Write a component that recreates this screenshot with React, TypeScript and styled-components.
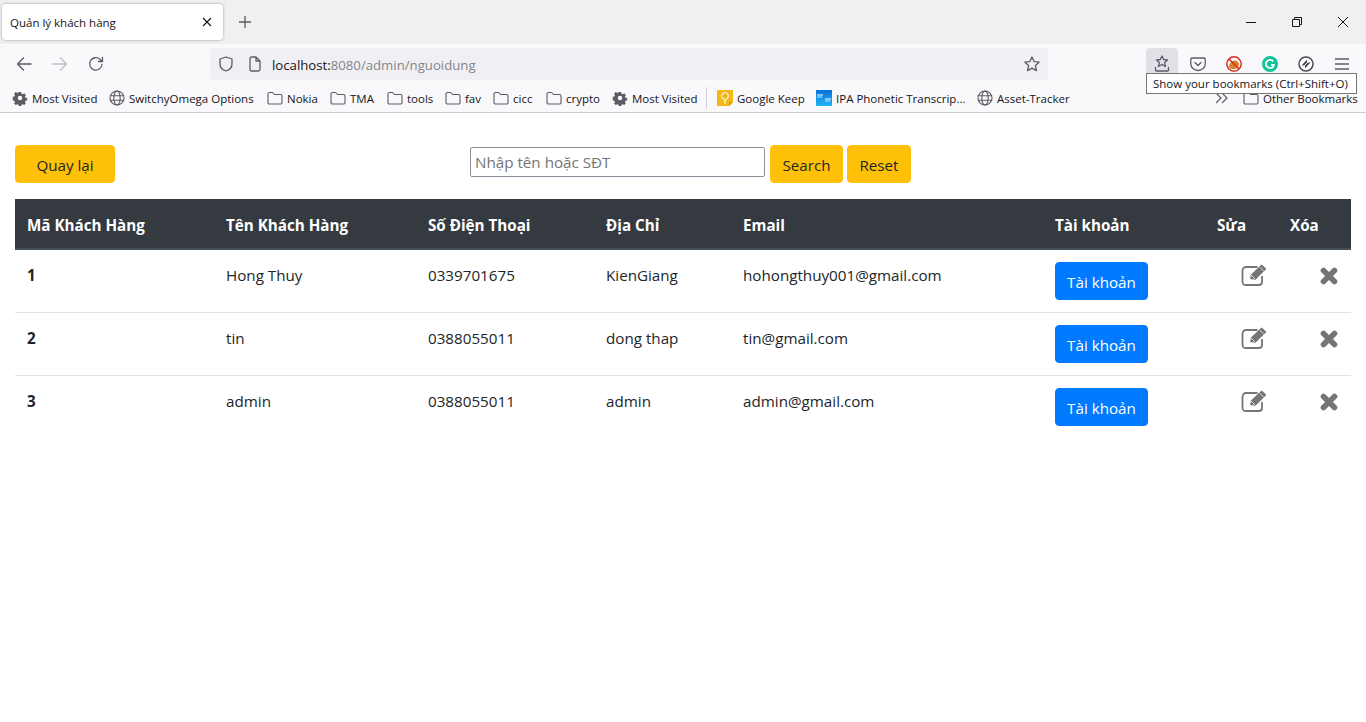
import React from "react";
import styled, { createGlobalStyle } from "styled-components";

const Global = createGlobalStyle`
  html, body { margin: 0; padding: 0; background: #fff; }
  body { font-family: "Open Sans", "Noto Sans", sans-serif; color: #212529; width: 1366px; height: 722px; overflow: hidden; }
  * { box-sizing: border-box; }
`;

const Browser = styled.div`
  position: relative;
  height: 113px;
`;
const TabStrip = styled.div`
  height: 44px;
  background: #f0f0f0;
  display: flex;
  align-items: flex-start;
  padding: 4px 0 0 2px;
`;
const Tab = styled.div`
  width: 221px;
  height: 36px;
  background: #fff;
  border-radius: 4px;
  box-shadow: 0 0 3px rgba(0, 0, 0, 0.35);
  display: flex;
  align-items: center;
  justify-content: space-between;
  padding: 0 11px 0 8px;
  font-size: 11.5px;
  color: #15141a;
`;
const NewTab = styled.div`
  width: 44px;
  height: 36px;
  display: flex;
  align-items: center;
  justify-content: center;
`;
const WindowControls = styled.div`
  margin-left: auto;
  margin-top: -4px;
  display: flex;
`;
const WindowButton = styled.div`
  width: 46px;
  height: 44px;
  display: flex;
  align-items: center;
  justify-content: center;
`;
const NavBar = styled.div`
  height: 44px;
  background: #f9f9fb;
  display: flex;
  align-items: center;
  padding: 0 0 4px 6px;
`;
const NavButton = styled.div<{ $active?: boolean }>`
  width: 36px;
  height: 32px;
  display: flex;
  align-items: center;
  justify-content: center;
  flex: none;
  border-radius: 4px;
  background: ${(p) => (p.$active ? "#e0e0e6" : "transparent")};
`;
const UrlBar = styled.div`
  width: 838px;
  height: 32px;
  margin-left: 96px;
  background: #f0f0f4;
  border-radius: 4px;
  display: flex;
  align-items: center;
  padding: 0 8px 0 8px;
  font-size: 13.2px;
  flex: none;
`;
const UrlHost = styled.span`
  color: #15141a;
`;
const UrlPath = styled.span`
  color: #85848a;
`;
const UrlText = styled.div`
  margin: 1px 0 0 9px;
  flex: 1;
`;
const ToolGroup = styled.div`
  margin-left: 98px;
  display: flex;
  align-items: center;
`;
const BookmarkBar = styled.div`
  height: 25px;
  background: #f9f9fb;
  border-bottom: 1px solid #ccc;
  display: flex;
  align-items: center;
  padding: 0 0 4px 12px;
  font-size: 11.5px;
  color: #15141a;
  white-space: nowrap;
`;
const Bookmark = styled.div<{ $w: number }>`
  width: ${(p) => p.$w}px;
  flex: none;
  display: flex;
  align-items: center;
  gap: 4px;
  overflow: hidden;
`;
const BookmarkDivider = styled.div`
  width: 1px;
  height: 22px;
  background: #cfcfd8;
  margin: 0 10px 0 0;
  flex: none;
`;
const Tooltip = styled.div`
  position: absolute;
  left: 1146px;
  top: 73px;
  width: 211px;
  height: 21px;
  background: #fff;
  border: 1px solid #767676;
  font-size: 11.5px;
  line-height: 19px;
  padding-left: 6px;
  color: #15141a;
  white-space: nowrap;
`;

const Page = styled.main`
  padding: 32px 15px 0;
`;
const TopRow = styled.div`
  display: flex;
  align-items: flex-start;
  height: 38px;
  margin-bottom: 16px;
`;
const Button = styled.button<{ $variant: "warning" | "primary"; $w: number }>`
  width: ${(p) => p.$w}px;
  height: 38px;
  flex: none;
  border: 1px solid ${(p) => (p.$variant === "warning" ? "#ffc107" : "#007bff")};
  background: ${(p) => (p.$variant === "warning" ? "#ffc107" : "#007bff")};
  color: ${(p) => (p.$variant === "warning" ? "#212529" : "#fff")};
  border-radius: 4px;
  font-family: inherit;
  font-size: 15.2px;
  padding: 1px 0 0;
`;
const SearchForm = styled.form`
  display: flex;
  align-items: flex-start;
  gap: 5px;
  margin-left: 355px;
`;
const SearchGroup = styled.div`
  display: flex;
  gap: 4px;
`;
const SearchInput = styled.input`
  width: 295px;
  height: 30px;
  margin-top: 2px;
  border: 1px solid #8f8f9d;
  border-radius: 2px;
  padding: 0 4px;
  font-family: inherit;
  font-size: 15.2px;
  &::placeholder { color: #757575; opacity: 1; }
`;
const Table = styled.table`
  width: 1336px;
  border-collapse: collapse;
  table-layout: fixed;
  font-size: 15.2px;
`;
const HeadCell = styled.th<{ $w: number }>`
  width: ${(p) => p.$w}px;
  height: 50px;
  background: #343a40;
  color: #fff;
  border-bottom: 2px solid #454d55;
  padding: 2px 12px 0;
  text-align: left;
  font-weight: 700;
`;
const Row = styled.tr`
  border-bottom: 1px solid #dee2e6;
  &:last-child { border-bottom: none; }
`;
const Cell = styled.td<{ $bold?: boolean }>`
  height: 63px;
  padding: 12px;
  vertical-align: top;
  line-height: 26px;
  font-weight: ${(p) => (p.$bold ? 700 : 400)};
`;
const EditGlyph = styled.svg`
  display: block;
  width: 27px;
  height: 22px;
  margin: 2px 0 0 24px;
`;
const CloseGlyph = styled.svg`
  display: block;
  width: 18px;
  height: 18px;
  margin: 5px 0 0 30px;
`;

const EditIcon = () => (
  <EditGlyph viewBox="0 0 27 22">
    <path d="M16.500 3H5a3.500 3.500 0 00-3.500 3.500v11.500A3 3 0 005 21h13a3 3 0 003-3v-6" fill="none" stroke="#757575" strokeWidth="1.800" />
    <path d="M9 15l1-4.500L20 .9a1 1 0 011.300 0l3.500 3.400a1 1 0 010 1.300L14.500 15.800z" fill="#757575" />
    <path d="M19 3.400l3.700 3.600" stroke="#fff" strokeWidth=".8" />
    <path d="M10 11l4 4" stroke="#fff" strokeWidth=".8" />
  </EditGlyph>
);
const CloseIcon = () => (
  <CloseGlyph viewBox="0 0 18 18">
    <path d="M3.500 3.500l11 11M14.500 3.500l-11 11" stroke="#757575" strokeWidth="5.600" strokeLinecap="round" />
  </CloseGlyph>
);

const ic = { fill: "none", stroke: "#5b5b66", strokeWidth: 1.3, strokeLinecap: "round" as const, strokeLinejoin: "round" as const };

const Gear = () => (
  <svg width="16" height="16" viewBox="0 0 16 16" style={{ flex: "none" }}>
    <path fill="#5b5b66" fillRule="evenodd" d="M6.600 1h2.800l.4 2 1.400.6 1.700-1.100 2 2-1.100 1.700.6 1.400 2 .4v2.800l-2 .4-.6 1.400 1.100 1.700-2 2-1.700-1.100-1.400.6-.4 2H6.600l-.4-2-1.400-.6-1.700 1.100-2-2 1.100-1.700-.6-1.400-2-.4V6.600l2-.4.6-1.400L1.100 3.100l2-2 1.700 1.100L6.200 1.600zM8 5.400a2.600 2.600 0 100 5.200 2.600 2.600 0 000-5.200z" transform="translate(1.100 1.100) scale(.86)" />
  </svg>
);
const Globe = () => (
  <svg width="16" height="16" viewBox="0 0 16 16" style={{ flex: "none" }} {...ic} strokeWidth={1.1}>
    <circle cx="8" cy="8" r="7" />
    <ellipse cx="8" cy="8" rx="3.200" ry="7" />
    <path d="M1.200 5.800h13.600M1.200 10.200h13.600" />
  </svg>
);
const Folder = () => (
  <svg width="16" height="16" viewBox="0 0 16 16" style={{ flex: "none" }} {...ic} strokeWidth={1.1}>
    <path d="M1 4a1.500 1.500 0 011.500-1.500h3.200L7.500 4.500h6A1.500 1.500 0 0115 6v6.500a1.500 1.500 0 01-1.500 1.500h-11A1.500 1.500 0 011 12.500z" />
  </svg>
);
const Keep = () => (
  <svg width="16" height="16" viewBox="0 0 16 16" style={{ flex: "none" }}>
    <path fill="#f5b818" d="M0 0h16v12l-4 4H0z" />
    <path fill="#d99c0c" d="M16 12h-4v4z" />
    <circle cx="8" cy="6" r="3.400" fill="none" stroke="#fff" strokeWidth="1" />
    <path stroke="#fff" strokeWidth="1.200" d="M6.500 11h3M7 13h2" />
  </svg>
);
const Ipa = () => (
  <svg width="16" height="16" viewBox="0 0 16 16" style={{ flex: "none" }}>
    <defs>
      <linearGradient id="ipa" x1="0" y1="0" x2="0" y2="1">
        <stop offset="0" stopColor="#0a6fd8" />
        <stop offset="1" stopColor="#21b4f7" />
      </linearGradient>
    </defs>
    <rect width="16" height="16" fill="url(#ipa)" />
    <path stroke="#fff" strokeWidth="1" d="M1 5h6M9 9h6" />
    <path stroke="#cfe8ff" strokeWidth="1" d="M1 7h5M9 11h5" />
  </svg>
);

const customers = [
  { id: 1, name: "Hong Thuy", phone: "0339701675", addr: "KienGiang", email: "hohongthuy001@gmail.com" },
  { id: 2, name: "tin", phone: "0388055011", addr: "dong thap", email: "tin@gmail.com" },
  { id: 3, name: "admin", phone: "0388055011", addr: "admin", email: "admin@gmail.com" },
];

const heads: [string, number][] = [
  ["Mã Khách Hàng", 199], ["Tên Khách Hàng", 202], ["Số Điện Thoại", 178], ["Địa Chỉ", 137],
  ["Email", 312], ["Tài khoản", 162], ["Sửa", 73], ["Xóa", 73],
];

export default function App() {
  return (
    <>
      <Global />
      <Browser>
        <TabStrip>
          <Tab>
            <span>Quản lý khách hàng</span>
            <svg width="10" height="10" viewBox="0 0 10 10" stroke="#15141a" strokeWidth="1.100"><path d="M1 1l8 8M9 1l-8 8" /></svg>
          </Tab>
          <NewTab>
            <svg width="14" height="14" viewBox="0 0 14 14" stroke="#5b5b66" strokeWidth="1.300"><path d="M7 1v12M1 7h12" /></svg>
          </NewTab>
          <WindowControls>
            <WindowButton>
              <svg width="10" height="10" viewBox="0 0 10 10" stroke="#15141a"><path d="M0 5.500h10" /></svg>
            </WindowButton>
            <WindowButton>
              <svg width="10" height="10" viewBox="0 0 10 10" fill="none" stroke="#15141a"><path d="M.5 2.500h7v7h-7zM2.500 2.500v-2h7v7h-2" /></svg>
            </WindowButton>
            <WindowButton>
              <svg width="10" height="10" viewBox="0 0 10 10" stroke="#15141a"><path d="M0 0l10 10M10 0L0 10" /></svg>
            </WindowButton>
          </WindowControls>
        </TabStrip>
        <NavBar>
          <NavButton>
            <svg width="16" height="16" viewBox="0 0 16 16" {...ic}><path d="M15 8H1.500M7.500 2l-6 6 6 6" /></svg>
          </NavButton>
          <NavButton>
            <svg width="16" height="16" viewBox="0 0 16 16" {...ic} stroke="#bdbdc2"><path d="M1 8h13.500M8.500 2l6 6-6 6" /></svg>
          </NavButton>
          <NavButton>
            <svg width="16" height="16" viewBox="0 0 16 16" {...ic}><path d="M14 8.500A6.200 6.200 0 1112 3.300L14.500 5.500M14.500 1.500v4h-4" /></svg>
          </NavButton>
          <UrlBar>
            <svg width="16" height="16" viewBox="0 0 16 16" {...ic} style={{ flex: "none" }}><path d="M8 1l6 2v5c0 3.500-3 6-6 7-3-1-6-3.500-6-7V3z" /></svg>
            <svg width="16" height="16" viewBox="0 0 16 16" {...ic} style={{ flex: "none", marginLeft: 13 }}><path d="M3 2.500A1.500 1.500 0 014.500 1h4.500L13 5v8.500a1.500 1.500 0 01-1.500 1.500h-7A1.500 1.500 0 013 13.500zM9 1v4h4" /></svg>
            <UrlText><UrlHost>localhost:</UrlHost><UrlPath>8080/admin/nguoidung</UrlPath></UrlText>
            <svg width="16" height="16" viewBox="0 0 16 16" {...ic} style={{ flex: "none" }}><path d="M8 1l2.100 4.600 5 .6-3.700 3.400 1 5L8 12.100 3.600 14.600l1-5L.9 6.200l5-.6z" /></svg>
          </UrlBar>
          <ToolGroup>
            <NavButton $active style={{ width: 32 }}>
              <svg width="16" height="18" viewBox="0 0 16 18" {...ic}><path d="M8 1l1.700 3.500 3.800.5-2.800 2.600.8 3.800L8 9.500l-3.500 1.900.8-3.800L2.500 5l3.800-.5zM1.500 12.500v2.500a1 1 0 001 1h11a1 1 0 001-1v-2.500" /></svg>
            </NavButton>
            <NavButton style={{ marginLeft: 2 }}>
              <svg width="16" height="16" viewBox="0 0 16 16" {...ic}><path d="M2 2h12a1.200 1.200 0 011.200 1.200V8a7.200 6.500 0 01-14.400 0V3.200A1.200 1.200 0 012 2zM5 6.500L8 9.500l3-3" /></svg>
            </NavButton>
            <NavButton>
              <svg width="16" height="16" viewBox="0 0 16 16"><circle cx="8" cy="8" r="7.200" fill="#fff" stroke="#d92d20" strokeWidth="1.500" /><path d="M3 11c0-4 3-6.500 6-6.500 2 0 4 2 4 4S11 13 8 13H5z" fill="#d9822b" /><path d="M3 3l10 10" stroke="#d92d20" strokeWidth="1.500" /></svg>
            </NavButton>
            <NavButton>
              <svg width="16" height="16" viewBox="0 0 16 16"><circle cx="8" cy="8" r="8" fill="#15c39a" /><path d="M11.300 5.400A4.100 4.100 0 108.300 12c2 0 3.300-1.300 3.500-3.200H9" fill="none" stroke="#fff" strokeWidth="1.700" /></svg>
            </NavButton>
            <NavButton>
              <svg width="16" height="16" viewBox="0 0 16 16"><circle cx="8" cy="8" r="7" fill="#fff" stroke="#4a4a52" strokeWidth="1.500" /><path d="M3.500 9.500L9 3.500v3h3.500L7 12.500v-3z" fill="#4a4a52" /><path d="M4 12l8-8" stroke="#fff" strokeWidth="1" /></svg>
            </NavButton>
            <NavButton>
              <svg width="14" height="12" viewBox="0 0 14 12" stroke="#5b5b66" strokeWidth="1.300"><path d="M0 1h14M0 6h14M0 11h14" /></svg>
            </NavButton>
          </ToolGroup>
        </NavBar>
        <BookmarkBar>
          <Bookmark $w={97}><Gear />Most Visited</Bookmark>
          <Bookmark $w={158}><Globe />SwitchyOmega Options</Bookmark>
          <Bookmark $w={63}><Folder />Nokia</Bookmark>
          <Bookmark $w={57}><Folder />TMA</Bookmark>
          <Bookmark $w={58}><Folder />tools</Bookmark>
          <Bookmark $w={48}><Folder />fav</Bookmark>
          <Bookmark $w={53}><Folder />cicc</Bookmark>
          <Bookmark $w={66}><Folder />crypto</Bookmark>
          <Bookmark $w={94}><Gear />Most Visited</Bookmark>
          <BookmarkDivider />
          <Bookmark $w={99}><Keep />Google Keep</Bookmark>
          <Bookmark $w={161}><Ipa />IPA Phonetic Transcrip...</Bookmark>
          <Bookmark $w={238}><Globe />Asset-Tracker</Bookmark>
          <Bookmark $w={28}>
            <svg width="14" height="12" viewBox="0 0 14 12" fill="none" stroke="#5b5b66" strokeWidth="1.200"><path d="M1 1l5 5-5 5M7 1l5 5-5 5" /></svg>
          </Bookmark>
          <Bookmark $w={120}><Folder />Other Bookmarks</Bookmark>
        </BookmarkBar>
        <Tooltip>Show your bookmarks (Ctrl+Shift+O)</Tooltip>
      </Browser>
      <Page>
        <TopRow>
          <Button type="button" $variant="warning" $w={100}>Quay lại</Button>
          <SearchForm>
            <SearchInput placeholder="Nhập tên hoặc SĐT" />
            <SearchGroup>
              <Button type="button" $variant="warning" $w={73}>Search</Button>
              <Button type="button" $variant="warning" $w={64}>Reset</Button>
            </SearchGroup>
          </SearchForm>
        </TopRow>
        <Table>
          <thead>
            <tr>{heads.map(([h, w]) => <HeadCell key={h} $w={w}>{h}</HeadCell>)}</tr>
          </thead>
          <tbody>
            {customers.map((c) => (
              <Row key={c.id}>
                <Cell $bold>{c.id}</Cell>
                <Cell>{c.name}</Cell>
                <Cell>{c.phone}</Cell>
                <Cell>{c.addr}</Cell>
                <Cell>{c.email}</Cell>
                <Cell><Button type="button" $variant="primary" $w={93}>Tài khoản</Button></Cell>
                <Cell><EditIcon /></Cell>
                <Cell><CloseIcon /></Cell>
              </Row>
            ))}
          </tbody>
        </Table>
      </Page>
    </>
  );
}
